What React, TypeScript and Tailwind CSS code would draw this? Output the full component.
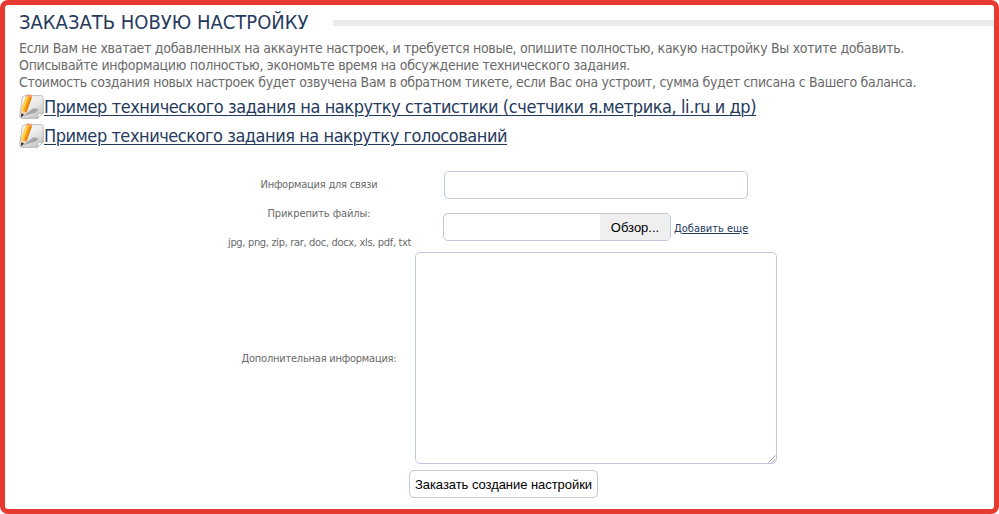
function PencilIcon() {
  return (
    <svg width="25" height="26" viewBox="0 0 25 26" className="shrink-0">
      <defs>
        <linearGradient id="paper" x1="0" y1="0" x2="0.6" y2="1">
          <stop offset="0" stopColor="#ffffff" />
          <stop offset="0.55" stopColor="#eaeaea" />
          <stop offset="1" stopColor="#c8c8c8" />
        </linearGradient>
      </defs>
      <path d="M6 1.8 L21.5 1.5 Q24 1.5 24.1 3.6 L24.4 19 L18.5 24.3 L3.5 24.4 Q0.5 24.4 0.7 21.6 L3.2 4.2 Q3.6 1.8 6 1.8Z" fill="url(#paper)" stroke="#b0b0b0" strokeWidth="0.8" />
      <path d="M24.2 19 L19 19.5 L18.5 24.2Z" fill="#fafafa" stroke="#a5a5a5" strokeWidth="0.6" />
      <path d="M3.5 22.6 L14 14.6 L19.5 14.9 L17 18.6 L9.5 20.6Z" fill="#999999" opacity="0.8" />
      <path d="M7.2 2.2 L12.9 3.2 L7.4 18.4 L1.9 16.2Z" fill="#f9a51a" />
      <path d="M7.2 2.2 L9.4 2.6 L4.1 17 L1.9 16.2Z" fill="#ffd850" />
      <path d="M11.2 2.9 L12.9 3.2 L7.4 18.4 L5.8 17.8Z" fill="#e8820c" />
      <path d="M7.9 0.2 L13.2 1 L12.9 3.2 L7.2 2.2Z" fill="#f0a070" />
      <path d="M1.9 16.2 L7.4 18.4 L2.4 22.9Z" fill="#ecd3a2" />
      <path d="M2.1 19.4 L5 20.6 L2.3 23.6Z" fill="#262626" />
    </svg>
  );
}

export default function App() {
  return (
    <div className="h-[514px] w-[999px] bg-white">
      <div className="h-full overflow-hidden rounded-[8px] border-[5px] border-[#e63a30] bg-white pt-px pl-[14px] font-['DejaVu_Sans_Condensed',sans-serif] text-[#6a6a6a]">
        <header className="flex h-[34px] items-start">
          <h1 className="w-[314px] shrink-0 text-[20px] leading-[33px] whitespace-nowrap text-[#263a5e]">
            ЗАКАЗАТЬ НОВУЮ НАСТРОЙКУ
          </h1>
          <div className="mt-[14px] h-[6px] flex-1 bg-[#ebebeb]" />
        </header>

        <div className="text-[14px] leading-[17px] whitespace-nowrap">
          <p className="tracking-[-0.294px]">
            Если Вам не хватает добавленных на аккаунте настроек, и требуется новые, опишите полностью, какую настройку Вы хотите добавить.
          </p>
          <p className="tracking-[-0.287px]">
            Описывайте информацию полностью, экономьте время на обсуждение технического задания.
          </p>
          <p className="tracking-[-0.337px]">
            Стоимость создания новых настроек будет озвучена Вам в обратном тикете, если Вас она устроит, сумма будет списана с Вашего баланса.
          </p>
        </div>

        <nav className="mt-px text-[18px] leading-[29px] whitespace-nowrap text-[#263a5e]">
          <div className="flex h-[29px] items-center">
            <PencilIcon />
            <a href="#" className="tracking-[-0.42px] underline decoration-1 underline-offset-2">
              Пример технического задания на накрутку статистики (счетчики я.метрика, li.ru и др)
            </a>
          </div>
          <div className="flex h-[29px] items-center">
            <PencilIcon />
            <a href="#" className="tracking-[-0.457px] underline decoration-1 underline-offset-2">
              Пример технического задания на накрутку голосований
            </a>
          </div>
        </nav>

        <form className="mt-5 ml-[209px] w-[549px] text-[11px]">
          <div className="flex h-[29px] gap-[5px]">
            <label className="w-[182px] text-center leading-[29px] tracking-[-0.23px] whitespace-nowrap">
              Информация для связи
            </label>
            <div className="flex flex-1 justify-center pt-px">
              <input className="h-[28px] w-[304px] rounded-[5px] border border-[#bfc7da] px-2 outline-none" />
            </div>
          </div>
          <div className="flex h-[53px] gap-[5px]">
            <div className="w-[182px] text-center leading-[29px] whitespace-nowrap">
              <p className="tracking-[-0.09px]">Прикрепить файлы:</p>
              <p className="tracking-[-0.33px]">jpg, png, zip, rar, doc, docx, xls, pdf, txt</p>
            </div>
            <div className="flex flex-1 pt-[14px] pl-[28px]">
              <div className="flex h-[28px] w-[228px] justify-end overflow-hidden rounded-[5px] border border-[#bfc7da]">
                <button type="button" className="w-[70px] bg-[#efefef] pt-px font-['Liberation_Sans',sans-serif] text-[13px] text-black">
                  Обзор...
                </button>
              </div>
              <a href="#" className="ml-[3px] h-[28px] leading-[32px] whitespace-nowrap text-[#263a5e] underline decoration-1 underline-offset-1">
                Добавить еще
              </a>
            </div>
          </div>
          <div className="flex h-[212px] gap-[5px]">
            <label className="w-[182px] text-center leading-[214px] tracking-[-0.23px] whitespace-nowrap">
              Дополнительная информация:
            </label>
            <div className="relative h-[212px] w-[362px]">
              <textarea className="block h-[212px] w-[362px] resize-none rounded-[5px] border border-[#bfc7da] p-2 outline-none" />
              <svg width="8" height="8" viewBox="0 0 8 8" className="pointer-events-none absolute right-px bottom-px">
                <path d="M0.5 7.5 L7.5 0.5 M4 7.5 L7.5 4" stroke="#9a9a9a" strokeWidth="1" />
              </svg>
            </div>
          </div>
          <button type="button" className="mt-[6px] ml-[181px] block h-[28px] w-[189px] rounded-[5px] border border-[#bfc7da] bg-white pt-px font-['Liberation_Sans',sans-serif] text-[13px] tracking-[-0.05px] whitespace-nowrap text-black">
            Заказать создание настройки
          </button>
        </form>
      </div>
    </div>
  );
}
